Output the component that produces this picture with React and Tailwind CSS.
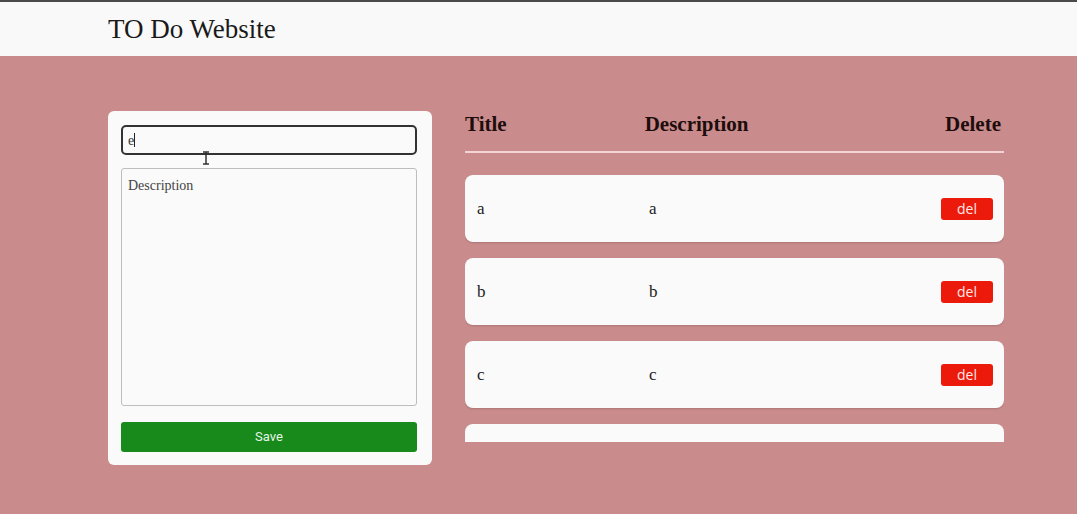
import React from "react";

const serif = { fontFamily: '"Liberation Serif", "DejaVu Serif", serif' };
const sans = { fontFamily: '"Open Sans", "Liberation Sans", sans-serif' };
const narrow = { fontFamily: '"Liberation Sans Narrow", "Roboto", "Liberation Sans", sans-serif' };

function Row({ t, d }) {
  return (
    <div className="grid grid-cols-3 items-center bg-[#fafafa] rounded-lg h-[67px] pl-3 pr-[11px] shrink-0 shadow-[0_1px_2px_rgba(0,0,0,0.15)]">
      <div className="text-[17px] text-[#222]">{t}</div>
      <div className="text-[17px] text-[#222]">{d}</div>
      <div className="flex justify-end">
        <button style={sans} className="w-[52px] h-[22px] rounded-[3px] bg-[#ec1a0b] text-[#fde8e6] text-[14px] leading-none">del</button>
      </div>
    </div>
  );
}

export default function App() {
  return (
    <div className="w-[1077px] h-[514px] bg-[#c98b8b] overflow-hidden" style={serif}>
      <div className="h-[2px] bg-[#4b4b4b]" />
      <header className="h-[54px] bg-[#f9f9f9] flex items-center pl-[108px]">
        <h1 className="text-[27px] text-[#1a1a1a]">TO Do Website</h1>
      </header>
      <main className="flex pl-[108px] pt-[55px] gap-[33px]">
        <div className="relative w-[324px] h-[354px] bg-[#fafafa] rounded-md pl-[13px] pr-[15px] pt-[14px] pb-[13px] flex flex-col">
          <div className="h-[30px] border-2 border-[#333] rounded-[5px] bg-[#fafafa] flex items-center px-[5px]">
            <span className="text-[14px] text-[#333]">e</span>
            <span className="w-px h-[14px] bg-[#222]" />
          </div>
          <div className="mt-[13px] h-[238px] border border-[#bdbdbd] rounded-[3px] bg-[#fafafa] px-[6px] pt-[4px]">
            <span className="text-[14px] text-[#444]">Description</span>
          </div>
          <button style={narrow} className="mt-[16px] h-[30px] rounded-[3px] bg-[#178a1b] text-[#e8f5e8] text-[13px]">Save</button>
          <svg className="absolute left-[93px] top-[40px]" width="10" height="14" viewBox="0 0 10 14">
            <path d="M2 1h6M5 1v12M2 13h6" stroke="#333" strokeWidth="1.5" fill="none" />
          </svg>
        </div>
        <div className="w-[539px] flex flex-col">
          <div className="grid grid-cols-3 items-center h-[26px] -mt-[2px] text-[21px] font-bold text-[#1e0d0d]">
            <div>Title</div>
            <div>Description</div>
            <div className="text-right pr-[3px]">Delete</div>
          </div>
          <div className="mt-[16px] h-[2px] bg-[#f3d4d4]" />
          <div className="mt-[22px] h-[267px] overflow-hidden flex flex-col gap-[16px]">
            <Row t="a" d="a" />
            <Row t="b" d="b" />
            <Row t="c" d="c" />
            <div className="bg-[#fafafa] rounded-lg h-[67px] shrink-0" />
          </div>
        </div>
      </main>
    </div>
  );
}
